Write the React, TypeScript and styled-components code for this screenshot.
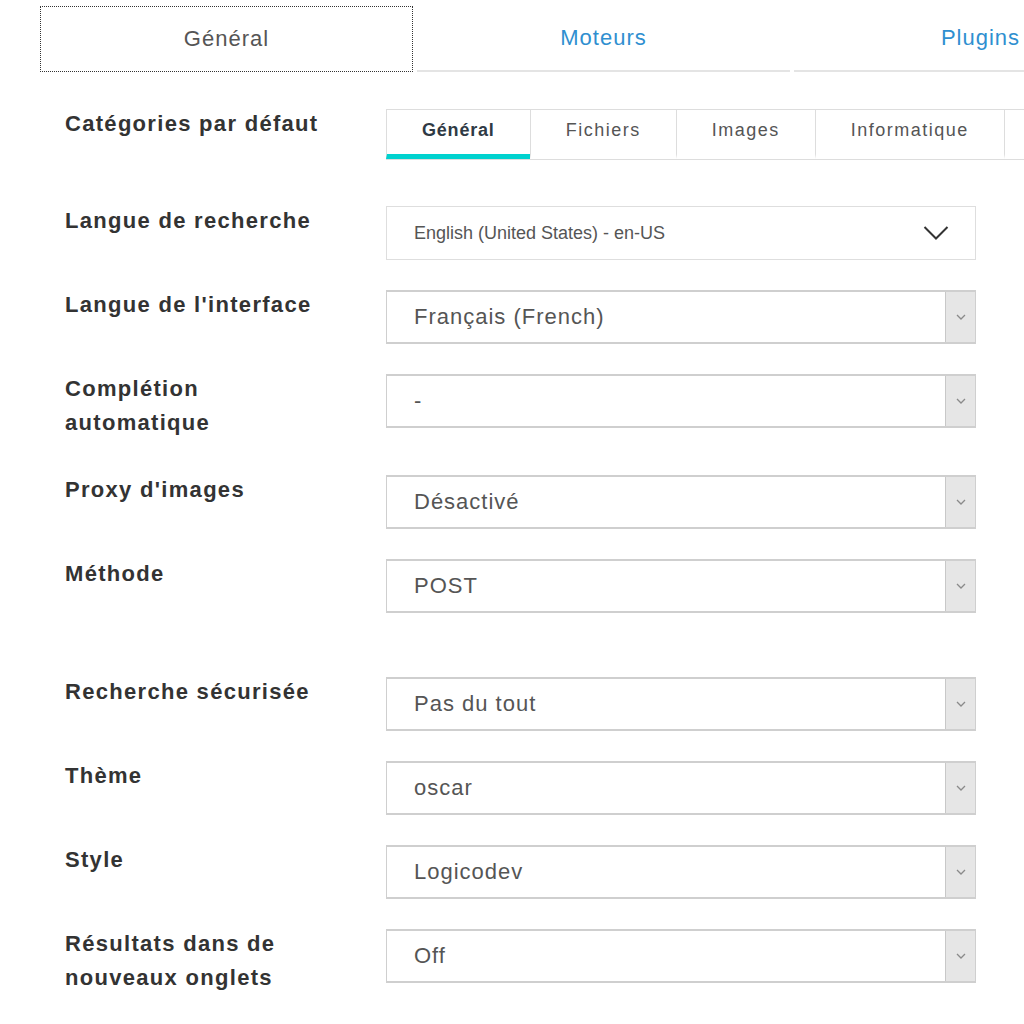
import React from 'react';
import styled, { createGlobalStyle } from 'styled-components';

const GlobalStyle = createGlobalStyle`
  html, body {
    margin: 0;
    padding: 0;
    background: #ffffff;
  }
  body {
    font-family: "Liberation Sans", Arial, sans-serif;
  }
`;

// --- Page ---

const Page = styled.div`
  width: 1024px;
  height: 1024px;
  overflow: hidden;
  background: #ffffff;
`;

// --- Top tabs ---

const TopTabs = styled.nav`
  display: flex;
  gap: 4px;
  padding: 6px 0 0 40px;
  width: max-content;
`;

const TopTab = styled.div<{ $active?: boolean }>`
  width: 373px;
  height: 66px;
  box-sizing: border-box;
  display: flex;
  align-items: center;
  justify-content: center;
  font-size: 22px;
  letter-spacing: 1px;
  color: ${({ $active }) => ($active ? '#555555' : '#2f8fd0')};
  border: ${({ $active }) => ($active ? '1px dotted #333333' : 'none')};
  border-bottom: ${({ $active }) =>
    $active ? '1px dotted #333333' : '2px solid #e4e4e4'};
  cursor: pointer;
`;

// --- Form ---

const Form = styled.div`
  display: flex;
  flex-direction: column;
  padding: 37px 0 0 65px;
`;

const Row = styled.div<{ $gap?: number }>`
  display: grid;
  grid-template-columns: 321px 590px;
  align-items: start;
  margin-bottom: ${({ $gap }) => $gap ?? 30}px;
`;

const Label = styled.div`
  font-size: 22px;
  font-weight: bold;
  letter-spacing: 1.3px;
  line-height: 34px;
  color: #333333;
  padding-bottom: 5px;
  margin-top: -2px;
`;

// --- Category tabs ---

const CatTabs = styled.div`
  display: flex;
  width: max-content;
  border-top: 1px solid #dddddd;
  border-bottom: 1px solid #dddddd;
`;

const CatTab = styled.div<{ $active?: boolean }>`
  height: 49px;
  min-width: 60px;
  box-sizing: border-box;
  padding: 0 35px 4px;
  display: flex;
  align-items: center;
  border-left: 1px solid #dddddd;
  font-size: 18px;
  letter-spacing: ${({ $active }) => ($active ? '0.8px' : '1.5px')};
  font-weight: ${({ $active }) => ($active ? 'bold' : 'normal')};
  color: ${({ $active }) => ($active ? '#2f3a45' : '#555555')};
  border-bottom: 5px solid ${({ $active }) => ($active ? '#00d2cf' : 'transparent')};
`;

// --- Selects ---

const Select = styled.div<{ $plain?: boolean }>`
  height: 54px;
  box-sizing: border-box;
  display: flex;
  align-items: stretch;
  border-style: solid;
  border-color: ${({ $plain }) => ($plain ? '#dedede' : '#cfcfcf')};
  border-width: ${({ $plain }) => ($plain ? '1px' : '2px 1px 2px 1px')};
  background: #ffffff;
`;

const SelectValue = styled.div<{ $small?: boolean }>`
  flex: 1;
  display: flex;
  align-items: center;
  padding-left: 27px;
  font-size: ${({ $small }) => ($small ? '18px' : '22px')};
  letter-spacing: ${({ $small }) => ($small ? '0' : '1px')};
  color: #555555;
`;

const BigChevron = styled.div`
  width: 70px;
  display: flex;
  align-items: center;
  justify-content: center;
  padding-right: 4px;
`;

const SelectButton = styled.div`
  width: 29px;
  background: #e6e6e6;
  border-left: 1px solid #c8c8c8;
  display: flex;
  align-items: center;
  justify-content: center;
`;

const ChevronDown: React.FC<{ size: 'big' | 'small' }> = ({ size }) =>
  size === 'big' ? (
    <svg width="26" height="16" viewBox="0 0 26 16">
      <polyline
        points="1.5,2 13,13.5 24.5,2"
        fill="none"
        stroke="#333333"
        strokeWidth="2"
      />
    </svg>
  ) : (
    <svg width="10" height="6" viewBox="0 0 10 6">
      <polyline
        points="1,1 5,5 9,1"
        fill="none"
        stroke="#8a8a8a"
        strokeWidth="1.3"
      />
    </svg>
  );

const SelectField: React.FC<{ value: string }> = ({ value }) => (
  <Select>
    <SelectValue>{value}</SelectValue>
    <SelectButton>
      <ChevronDown size="small" />
    </SelectButton>
  </Select>
);

const fields: { label: React.ReactNode; value: string; gap?: number }[] = [
  { label: "Langue de l'interface", value: 'Français (French)' },
  {
    label: (
      <>
        Complétion
        <br />
        automatique
      </>
    ),
    value: '-',
  },
  { label: "Proxy d'images", value: 'Désactivé' },
  { label: 'Méthode', value: 'POST', gap: 64 },
  { label: 'Recherche sécurisée', value: 'Pas du tout' },
  { label: 'Thème', value: 'oscar' },
  { label: 'Style', value: 'Logicodev' },
  {
    label: (
      <>
        Résultats dans de
        <br />
        nouveaux onglets
      </>
    ),
    value: 'Off',
  },
];

// the last tab runs past the right edge of the window, only its border shows
const categories = ['Général', 'Fichiers', 'Images', 'Informatique', ''];

const App: React.FC = () => (
  <Page>
    <GlobalStyle />
    <TopTabs>
      <TopTab $active>Général</TopTab>
      <TopTab>Moteurs</TopTab>
      <TopTab>Plugins</TopTab>
    </TopTabs>

    <Form>
      <Row $gap={46}>
        <Label>Catégories par défaut</Label>
        <CatTabs>
          {categories.map((c, i) => (
            <CatTab key={i} $active={i === 0}>
              {c}
            </CatTab>
          ))}
        </CatTabs>
      </Row>

      <Row>
        <Label>Langue de recherche</Label>
        <Select $plain>
          <SelectValue $small>English (United States) - en-US</SelectValue>
          <BigChevron>
            <ChevronDown size="big" />
          </BigChevron>
        </Select>
      </Row>

      {fields.map((f, i) => (
        <Row key={i} $gap={f.gap}>
          <Label>{f.label}</Label>
          <SelectField value={f.value} />
        </Row>
      ))}
    </Form>
  </Page>
);

export default App;
